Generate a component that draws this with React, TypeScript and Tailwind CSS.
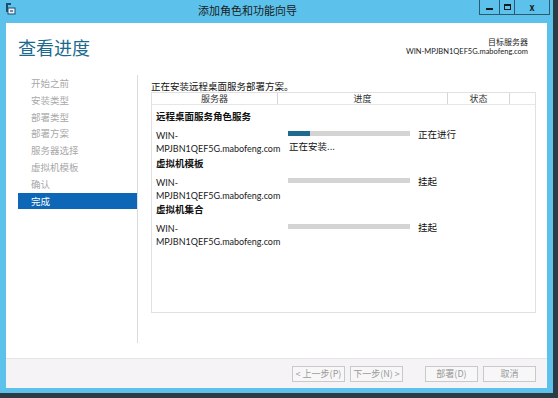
import React from 'react';

const cjk = { fontFamily: '"Noto Sans CJK SC", "Noto Sans", sans-serif' };
const latin = { fontFamily: 'Lato, "Noto Sans CJK SC", sans-serif' };

const navItems = ['开始之前', '安装类型', '部署类型', '部署方案', '服务器选择', '虚拟机模板', '确认', '完成'];

const rows = [
  { title: '远程桌面服务角色服务', progress: 18, status: '正在进行', note: '正在安装...' },
  { title: '虚拟机模板', progress: 0, status: '挂起', note: '' },
  { title: '虚拟机集合', progress: 0, status: '挂起', note: '' },
];

const FooterButton: React.FC<{ label: string; className?: string }> = ({ label, className }) => (
  <div
    className={`h-[16px] w-[53px] border border-[#c9c9c9] bg-[#f7f7f7] flex items-center justify-center text-[9px] text-[#9a9a9a] ${className || ''}`}
  >
    {label}
  </div>
);

const App: React.FC = () => {
  return (
    <div className="w-[558px] h-[398px] bg-[#2e3b44] pr-[5px] pb-[5px]" style={cjk}>
      <div className="w-full h-full bg-[#5cc2ec] flex flex-col px-[6px] pb-[5px]">
        {/* Title bar */}
        <div className="h-[23px] flex items-start relative">
          <div className="pt-[3px] -ml-[1px]">
            <svg width="11" height="12" viewBox="0 0 11 12">
              <rect x="1" y="0" width="2" height="9" fill="#1d4d6e" />
              <rect x="1" y="0" width="5" height="2" fill="#1d4d6e" />
              <rect x="3" y="5" width="7" height="6" fill="#e8f3f9" stroke="#1d4d6e" strokeWidth="1" />
              <rect x="5" y="7" width="3" height="2" fill="#6a8fa6" />
            </svg>
          </div>
          <div className="flex-1 text-center text-[11px] text-[#1b1b1b] leading-[23px] -mt-[1px]">
            添加角色和功能向导
          </div>
          <div className="flex h-[15px] border border-[#2c5870] border-t-0 -mr-[3px]">
            <div className="w-[20px] flex items-center justify-center border-r border-[#2c5870]">
              <div className="w-[7px] h-[2px] bg-[#1a1a1a] mt-[3px]" />
            </div>
            <div className="w-[15px] flex items-center justify-center border-r border-[#2c5870]">
              <div className="w-[7px] h-[6px] border border-[#1a1a1a] border-t-2" />
            </div>
            <div className="w-[34px] flex items-center justify-center text-[9px] text-[#1a1a1a] font-bold leading-none">
              x
            </div>
          </div>
        </div>

        {/* Client */}
        <div className="flex-1 bg-white flex flex-col">
          <div className="flex-1 flex flex-col">
            {/* Header */}
            <div className="h-[52px] flex justify-between items-start">
              <div className="pl-[12px] pt-[13px] text-[18px] leading-[22px] text-[#1b6a8e]">查看进度</div>
              <div className="pr-[19px] pt-[14px] text-right text-[8px] leading-[10px] text-[#222]">
                <div>目标服务器</div>
                <div className="text-[7.5px]" style={latin}>WIN-MPJBN1QEF5G.mabofeng.com</div>
              </div>
            </div>

            <div className="flex-1 flex">
              {/* Left nav */}
              <div className="w-[132px] border-r border-[#dcdcdc] mb-[15px] pl-[12px] flex flex-col">
                <div className="flex flex-col text-[9.5px] text-[#a8a8a8] leading-[17px]">
                  {navItems.map((item) => (
                    <div
                      key={item}
                      className={
                        item === '完成'
                          ? 'h-[16px] bg-[#0e67b6] text-white pl-[13px] leading-[16px]'
                          : 'h-[16.8px] pl-[13px]'
                      }
                    >
                      {item}
                    </div>
                  ))}
                </div>
              </div>

              {/* Content */}
              <div className="flex-1 pl-[13px] pr-[11px] pt-[5px] flex flex-col">
                <div className="text-[9.5px] leading-[12px] text-[#111]">正在安装远程桌面服务部署方案。</div>
                <div className="h-[221px] border border-[#e1e1e1] flex flex-col">
                  <div className="flex h-[12px] text-[9px] leading-[11px] text-[#333] border-b border-[#e6e6e6]">
                    <div className="w-[126px] text-center border-r border-[#d6d6d6]">服务器</div>
                    <div className="w-[170px] text-center border-r border-[#d6d6d6]">进度</div>
                    <div className="w-[62px] text-center border-r border-[#d6d6d6]">状态</div>
                    <div className="flex-1" />
                  </div>
                  <div className="flex-1 flex flex-col pl-[4px] pt-[5px]">
                    {rows.map((r) => (
                      <div key={r.title} className="flex flex-col">
                        <div className="text-[9.5px] font-bold leading-[12px] text-[#111] pb-[6px]">{r.title}</div>
                        <div className="flex pb-[1.5px]">
                          <div className="w-[132px] text-[9px] leading-[13px] text-[#1a1a1a] pt-[1px]" style={latin}>
                            <div>WIN-</div>
                            <div>MPJBN1QEF5G.mabofeng.com</div>
                          </div>
                          <div className="w-[130px] pt-[3px]">
                            <div className="h-[5px] w-[122px] bg-[#d4d4d4]">
                              <div className="h-full bg-[#1e6b8f]" style={{ width: `${r.progress}%` }} />
                            </div>
                            {r.note && (
                              <div className="text-[9.5px] leading-[12px] text-[#111] pt-[4px] pl-[1px]">{r.note}</div>
                            )}
                          </div>
                          <div className="text-[9.5px] leading-[12px] text-[#111]">{r.status}</div>
                        </div>
                      </div>
                    ))}
                  </div>
                </div>
              </div>
            </div>
          </div>

          {/* Footer */}
          <div className="h-[30px] border-t border-[#e4e4e4] bg-[#f5f3f5] flex items-center justify-end pr-[11px]">
            <FooterButton label="< 上一步(P)" />
            <FooterButton label="下一步(N) >" className="ml-[5px]" />
            <FooterButton label="部署(D)" className="ml-[22px]" />
            <FooterButton label="取消" className="ml-[5px]" />
          </div>
        </div>
      </div>
    </div>
  );
};

export default App;
